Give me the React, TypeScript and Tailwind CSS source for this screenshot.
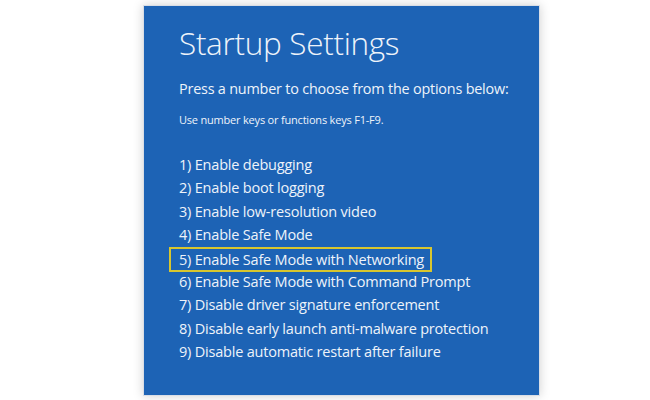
const options = [
  "1) Enable debugging",
  "2) Enable boot logging",
  "3) Enable low-resolution video",
  "4) Enable Safe Mode",
  "5) Enable Safe Mode with Networking",
  "6) Enable Safe Mode with Command Prompt",
  "7) Disable driver signature enforcement",
  "8) Disable early launch anti-malware protection",
  "9) Disable automatic restart after failure",
];

export default function App() {
  return (
    <div className="h-[400px] w-[650px] bg-white pl-[143px] pt-[5px]">
      <div
        className="h-[391px] w-[397px] border border-[#d9dee6] bg-[#1d63b5] pl-[35px] text-[#eef3fa] shadow-[0_0_10px_rgba(0,0,0,0.18)]"
        style={{ fontFamily: '"Open Sans", "Noto Sans", sans-serif' }}
      >
        <h1 className="mt-[15px] text-[31.5px] font-light leading-[44px] tracking-[-0.3px]">Startup Settings</h1>
        <p className="mt-[12px] whitespace-nowrap text-[14.4px] leading-[24px] tracking-[-0.2px]">
          Press a number to choose from the options below:
        </p>
        <p className="mt-[11px] text-[11px] leading-[16px] tracking-[-0.2px]">Use number keys or functions keys F1-F9.</p>
        <ul className="mt-[25px] text-[14.5px] tracking-[-0.2px]">
          {options.map((o, i) => (
            <li key={o} className="-ml-[10px] h-[23.4px] leading-[23.4px]">
              <span
                className={
                  i === 4
                    ? "inline-block h-[25px] w-[263px] border-2 border-[#d8c62e] pl-[8px] leading-[21px]"
                    : "inline-block pl-[10px]"
                }
              >
                {o}
              </span>
            </li>
          ))}
        </ul>
      </div>
    </div>
  );
}
